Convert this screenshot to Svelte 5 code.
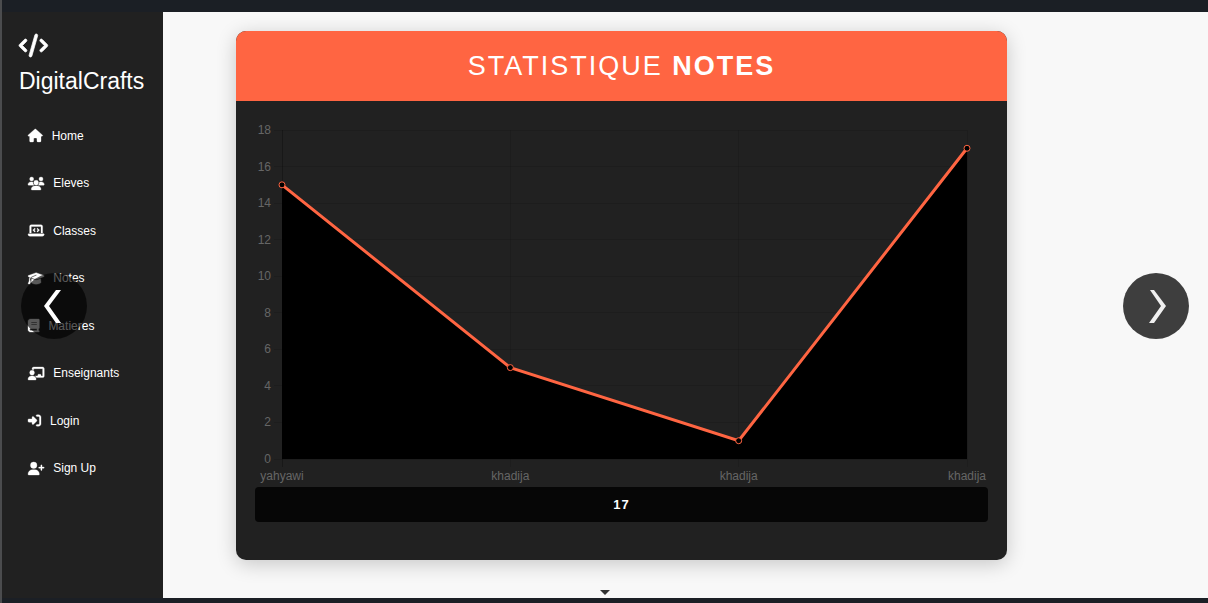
<script>
  const links = [
    { label: 'Home', w: 576, d: 'M575.8 255.5c0 18-15 32.1-32 32.1h-32l.7 160.2c0 2.7-.2 5.4-.5 8.1V472c0 22.1-17.9 40-40 40H456c-1.1 0-2.2 0-3.3-.1c-1.4 .1-2.8 .1-4.2 .1H416 392c-22.1 0-40-17.9-40-40V448 384c0-17.7-14.3-32-32-32H256c-17.7 0-32 14.3-32 32v64 24c0 22.1-17.9 40-40 40H160 128.1c-1.5 0-3-.1-4.5-.2c-1.2 .1-2.4 .2-3.6 .2H104c-22.1 0-40-17.9-40-40V360c0-.9 0-1.9 .1-2.8V287.6H32c-18 0-32-14-32-32.1c0-9 3-17 10-24L266.4 8c7-7 15-8 22-8s15 2 21 7L564.8 231.5c8 7 12 15 11 24z' },
    { label: 'Eleves', w: 640, d: 'M144 0a80 80 0 1 1 0 160A80 80 0 1 1 144 0zM512 0a80 80 0 1 1 0 160A80 80 0 1 1 512 0zM0 298.7C0 239.8 47.8 192 106.7 192h42.7c15.9 0 31 3.5 44.6 9.7c-1.3 7.2-1.9 14.7-1.9 22.3c0 38.2 16.8 72.5 43.3 96c-.2 0-.4 0-.7 0H21.3C9.6 320 0 310.4 0 298.7zM405.3 320c-.2 0-.4 0-.7 0c26.6-23.5 43.3-57.8 43.3-96c0-7.6-.7-15-1.9-22.3c13.6-6.3 28.7-9.7 44.6-9.7h42.7C592.2 192 640 239.8 640 298.7c0 11.8-9.6 21.3-21.3 21.3H405.3zM224 224a96 96 0 1 1 192 0 96 96 0 1 1 -192 0zM128 485.3C128 411.7 187.7 352 261.3 352H378.7C452.3 352 512 411.7 512 485.3c0 14.7-11.9 26.7-26.7 26.7H154.7c-14.7 0-26.7-11.9-26.7-26.7z' },
    { label: 'Classes', w: 640, d: 'M64 96c0-35.3 28.7-64 64-64H512c35.3 0 64 28.7 64 64V352H512V96H128V352H64V96zM0 403.2C0 392.6 8.6 384 19.2 384H620.8c10.6 0 19.2 8.6 19.2 19.2c0 42.4-34.4 76.8-76.8 76.8H76.8C34.4 480 0 445.6 0 403.2zM281 209l-31 31 31 31c9.4 9.4 9.4 24.6 0 33.9s-24.6 9.4-33.9 0l-48-48c-9.4-9.4-9.4-24.6 0-33.9l48-48c9.4-9.4 24.6-9.4 33.9 0s9.4 24.6 0 33.9zM393 175l48 48c9.4 9.4 9.4 24.6 0 33.9l-48 48c-9.4 9.4-24.6 9.4-33.9 0s-9.4-24.6 0-33.9l31-31-31-31c-9.4-9.4-9.4-24.6 0-33.9s24.6-9.4 33.9 0z' },
    { label: 'Notes', w: 640, d: 'M320 32c-8.1 0-16.1 1.4-23.7 4.1L15.8 137.4C6.3 140.9 0 149.9 0 160s6.3 19.1 15.8 22.6l57.9 20.9C57.3 229.3 48 259.8 48 291.9v28.1c0 28.4-10.8 57.7-22.3 80.8c-6.5 13-13.9 25.8-22.5 37.6C0 442.7-.9 448.3 .9 453.4s6 8.9 11.2 10.2l64 16c4.2 1.1 8.7 .3 12.4-2s6.3-6.1 7.1-10.4c8.6-42.8 4.3-81.2-2.1-108.7C90.3 344.3 86 329.8 80 316.5V291.9c0-30.2 10.2-58.7 27.9-81.5c12.9-15.5 29.6-28 49.2-35.7l157-61.7c8.2-3.2 17.5 .8 20.7 9s-.8 17.5-9 20.7l-157 61.7c-12.4 4.9-23.3 12.4-32.2 21.6l159.6 57.6c7.6 2.7 15.6 4.1 23.7 4.1s16.1-1.4 23.7-4.1L624.2 182.6c9.5-3.4 15.8-12.5 15.8-22.6s-6.3-19.1-15.8-22.6L343.7 36.1C336.1 33.4 328.1 32 320 32zM128 408c0 35.3 86 72 192 72s192-36.7 192-72L496.7 262.6 354.5 314c-11.1 4-22.8 6-34.5 6s-23.5-2-34.5-6L143.3 262.6 128 408z' },
    { label: 'Matieres', w: 448, d: 'M96 0C43 0 0 43 0 96V416c0 53 43 96 96 96H384h32c17.7 0 32-14.3 32-32s-14.3-32-32-32V384c17.7 0 32-14.3 32-32V32c0-17.7-14.3-32-32-32H384 96zm0 384H352v64H96c-17.7 0-32-14.3-32-32s14.3-32 32-32zm32-240c0-8.8 7.2-16 16-16H336c8.8 0 16 7.2 16 16s-7.2 16-16 16H144c-8.8 0-16-7.2-16-16zm16 48H336c8.8 0 16 7.2 16 16s-7.2 16-16 16H144c-8.8 0-16-7.2-16-16s7.2-16 16-16z' },
    { label: 'Enseignants', w: 640, d: 'M160 64c0-35.3 28.7-64 64-64H576c35.3 0 64 28.7 64 64V352c0 35.3-28.7 64-64 64H336.8c-11.8-25.5-29.9-47.5-52.4-64H384V320c0-17.7 14.3-32 32-32h64c17.7 0 32 14.3 32 32v32h64V64L224 64v49.1C205.2 102.2 183.3 96 160 96V64zm0 64a96 96 0 1 1 0 192 96 96 0 1 1 0-192zM133.3 352h53.3C260.3 352 320 411.7 320 485.3c0 14.7-11.9 26.7-26.7 26.7H26.7C11.9 512 0 500.1 0 485.3C0 411.7 59.7 352 133.3 352z' },
    { label: 'Login', w: 512, d: 'M217.9 105.9L340.7 228.7c7.2 7.2 11.3 17.1 11.3 27.3s-4.1 20.1-11.3 27.3L217.9 406.1c-6.4 6.4-15 9.9-24 9.9c-18.7 0-33.9-15.2-33.9-33.9l0-62.1L32 320c-17.7 0-32-14.3-32-32l0-64c0-17.7 14.3-32 32-32l128 0 0-62.1c0-18.7 15.2-33.9 33.9-33.9c9 0 17.6 3.6 24 9.9zM352 416l64 0c17.7 0 32-14.3 32-32l0-256c0-17.7-14.3-32-32-32l-64 0c-17.7 0-32-14.3-32-32s14.3-32 32-32l64 0c53 0 96 43 96 96l0 256c0 53-43 96-96 96l-64 0c-17.7 0-32-14.3-32-32s14.3-32 32-32z' },
    { label: 'Sign Up', w: 640, d: 'M96 128a128 128 0 1 1 256 0A128 128 0 1 1 96 128zM0 482.3C0 383.8 79.8 304 178.3 304h91.4C368.2 304 448 383.8 448 482.3c0 16.4-13.3 29.7-29.7 29.7H29.7C13.3 512 0 498.7 0 482.3zM504 312V248H440c-13.3 0-24-10.7-24-24s10.7-24 24-24h64V136c0-13.3 10.7-24 24-24s24 10.7 24 24v64h64c13.3 0 24 10.7 24 24s-10.7 24-24 24H552v64c0 13.3-10.7 24-24 24s-24-10.7-24-24z' }
  ];

  const notes = [
    { name: 'yahyawi', value: 15 },
    { name: 'khadija', value: 5 },
    { name: 'khadija', value: 1 },
    { name: 'khadija', value: 17 }
  ];
  const max = 18;
  const ticks = Array.from({ length: 10 }, (_, i) => i * 2);

  // The chart is drawn at the card's real width, twice as wide as high.
  let width = $state(733);
  let height = $derived(Math.round(width / 2));
  const left = 27;
  const top = 10;
  let right = $derived(width - 21);
  let bottom = $derived(height - 28);

  const x = (i) => left + ((right - left) * i) / (notes.length - 1);
  const y = (v) => bottom - ((bottom - top) * v) / max;
  const crisp = (n) => Math.floor(n) + 0.5;

  let line = $derived(notes.map((n, i) => `${x(i)},${y(n.value)}`).join(' '));
  let area = $derived(`${left},${bottom} ${line} ${right},${bottom}`);
</script>

<div class="page">
  <div class="content">
    <aside>
      <a class="brand" href="#home">
        <svg viewBox="0 0 640 512" aria-hidden="true"><path d="M392.8 1.2c-17-4.9-34.7 5-39.6 22l-128 448c-4.9 17 5 34.7 22 39.6s34.7-5 39.6-22l128-448c4.9-17-5-34.7-22-39.6zm80.6 120.1c-12.5 12.5-12.5 32.8 0 45.3L562.7 256l-89.4 89.4c-12.5 12.5-12.5 32.8 0 45.3s32.8 12.5 45.3 0l112-112c12.5-12.5 12.5-32.8 0-45.3l-112-112c-12.5-12.5-32.8-12.5-45.3 0zm-306.7 0c-12.5-12.5-32.8-12.5-45.3 0l-112 112c-12.5 12.5-12.5 32.8 0 45.3l112 112c12.5 12.5 32.8 12.5 45.3 0s12.5-32.8 0-45.3L77.3 256l89.4-89.4c12.5-12.5 12.5-32.8 0-45.3z" /></svg>
        <span>DigitalCrafts</span>
      </a>
      <nav>
        {#each links as link}
          <a href="#{link.label}">
            <svg viewBox="0 0 {link.w} 512" aria-hidden="true"><path d={link.d} /></svg>
            <span>{link.label}</span>
          </a>
        {/each}
      </nav>
    </aside>

    <main>
      <section class="card">
        <h1>STATISTIQUE <b>NOTES</b></h1>
        <div class="body">
          <div class="chart" bind:clientWidth={width}>
            <svg {width} {height} role="img">
              <g class="grid">
                {#each ticks as t}
                  <line x1={left - 8} x2={right} y1={crisp(y(t))} y2={crisp(y(t))} />
                {/each}
                {#each notes as _, i}
                  <line class:axis={i === 0} x1={crisp(x(i))} x2={crisp(x(i))} y1={top} y2={bottom + 8} />
                {/each}
              </g>
              <polygon points={area} />
              <polyline points={line} />
              {#each notes as n, i}
                <circle cx={x(i)} cy={y(n.value)} r="3" />
                <text x={x(i)} y={bottom + 21} text-anchor="middle">{n.name}</text>
              {/each}
              {#each ticks as t}
                <text x={left - 11} y={y(t) + 4} text-anchor="end">{t}</text>
              {/each}
            </svg>
          </div>
          <button class="total" type="button">17</button>
        </div>
      </section>
    </main>
  </div>

  <button class="arrow prev" type="button" aria-label="Previous">
    <svg viewBox="0 0 66 66"><path d="M35 17h5L28 33l12 17h-5L23 33z" /></svg>
  </button>
  <button class="arrow next" type="button" aria-label="Next">
    <svg viewBox="0 0 66 66"><path d="M27 17h4l12 16-12 17h-5l12-17z" /></svg>
  </button>
  <svg class="caret" viewBox="0 0 10 5" aria-hidden="true"><path d="M0 0h10L5 5z" /></svg>
</div>

<style>
  :global(body) {
    margin: 0;
    font-family: "Liberation Sans", Arial, sans-serif;
  }

  .page {
    position: relative;
    display: flex;
    box-sizing: border-box;
    min-height: 100vh;
    padding: 12px 0 5px;
    background: #1b1f25;
    border-left: 2px solid #4b4c4e;
  }

  .content {
    display: flex;
    flex: 1;
    background: #f8f8f8;
  }

  aside {
    box-sizing: border-box;
    width: 161px;
    flex: none;
    padding-top: 22px;
    background: #212121;
  }

  a {
    color: #fff;
    text-decoration: none;
  }

  a svg {
    display: block;
    overflow: visible;
    fill: currentColor;
    stroke: currentColor;
    stroke-width: 12;
  }

  .brand {
    display: block;
    padding-left: 17px;
    font-size: 23px;
    line-height: 26px;
  }

  .brand svg {
    height: 23px;
    margin-bottom: 11px;
    stroke-width: 16;
  }

  nav {
    display: grid;
    grid-auto-rows: 1fr;
    min-height: 380px;
    margin-top: 18px;
  }

  nav a {
    display: flex;
    align-items: center;
    gap: 9px;
    padding-left: 26px;
    font-size: 12px;
    line-height: 16px;
  }

  nav svg {
    height: 13px;
  }

  main {
    flex: 1;
    min-width: 0;
    padding: 19px 201px 37px 73px;
  }

  .card {
    overflow: hidden;
    border-radius: 10px;
    background: #212121;
    box-shadow: 0 4px 20px rgba(0, 0, 0, 0.2);
  }

  h1 {
    margin: 0;
    padding: 19px 0;
    background: #ff6542;
    color: #fff;
    font-size: 27px;
    font-weight: 400;
    line-height: 32px;
    letter-spacing: 2px;
    text-align: center;
  }

  .body {
    padding: 19px 19px 38px;
  }

  .chart {
    overflow: hidden;
  }

  .chart svg {
    display: block;
  }

  .grid line {
    stroke: rgba(0, 0, 0, 0.1);
  }

  .grid .axis {
    stroke: rgba(0, 0, 0, 0.25);
  }

  polyline {
    fill: none;
    stroke: #ff6542;
    stroke-width: 3;
  }

  circle {
    fill: #000;
    stroke: #ff6542;
  }

  text {
    fill: #666;
    font-size: 12px;
  }

  .total {
    display: block;
    width: 100%;
    padding: 9px 0;
    border: 0;
    border-radius: 4px;
    background: #060606;
    color: #fff;
    font: bold 13px/17px "Liberation Sans", Arial, sans-serif;
    letter-spacing: 1px;
  }

  .arrow {
    position: absolute;
    top: 50%;
    width: 66px;
    height: 66px;
    margin-top: -29px;
    padding: 0;
    border: 0;
    border-radius: 50%;
    background: rgba(0, 0, 0, 0.75);
    fill: #fff;
  }

  .prev {
    left: 19px;
    background: rgba(0, 0, 0, 0.65);
  }

  .next {
    right: 19px;
    fill: #f0f0f0;
  }

  .arrow svg {
    display: block;
  }

  .caret {
    position: absolute;
    bottom: 8px;
    left: 50%;
    width: 10px;
    margin-left: -5px;
    fill: #333;
  }
</style>
